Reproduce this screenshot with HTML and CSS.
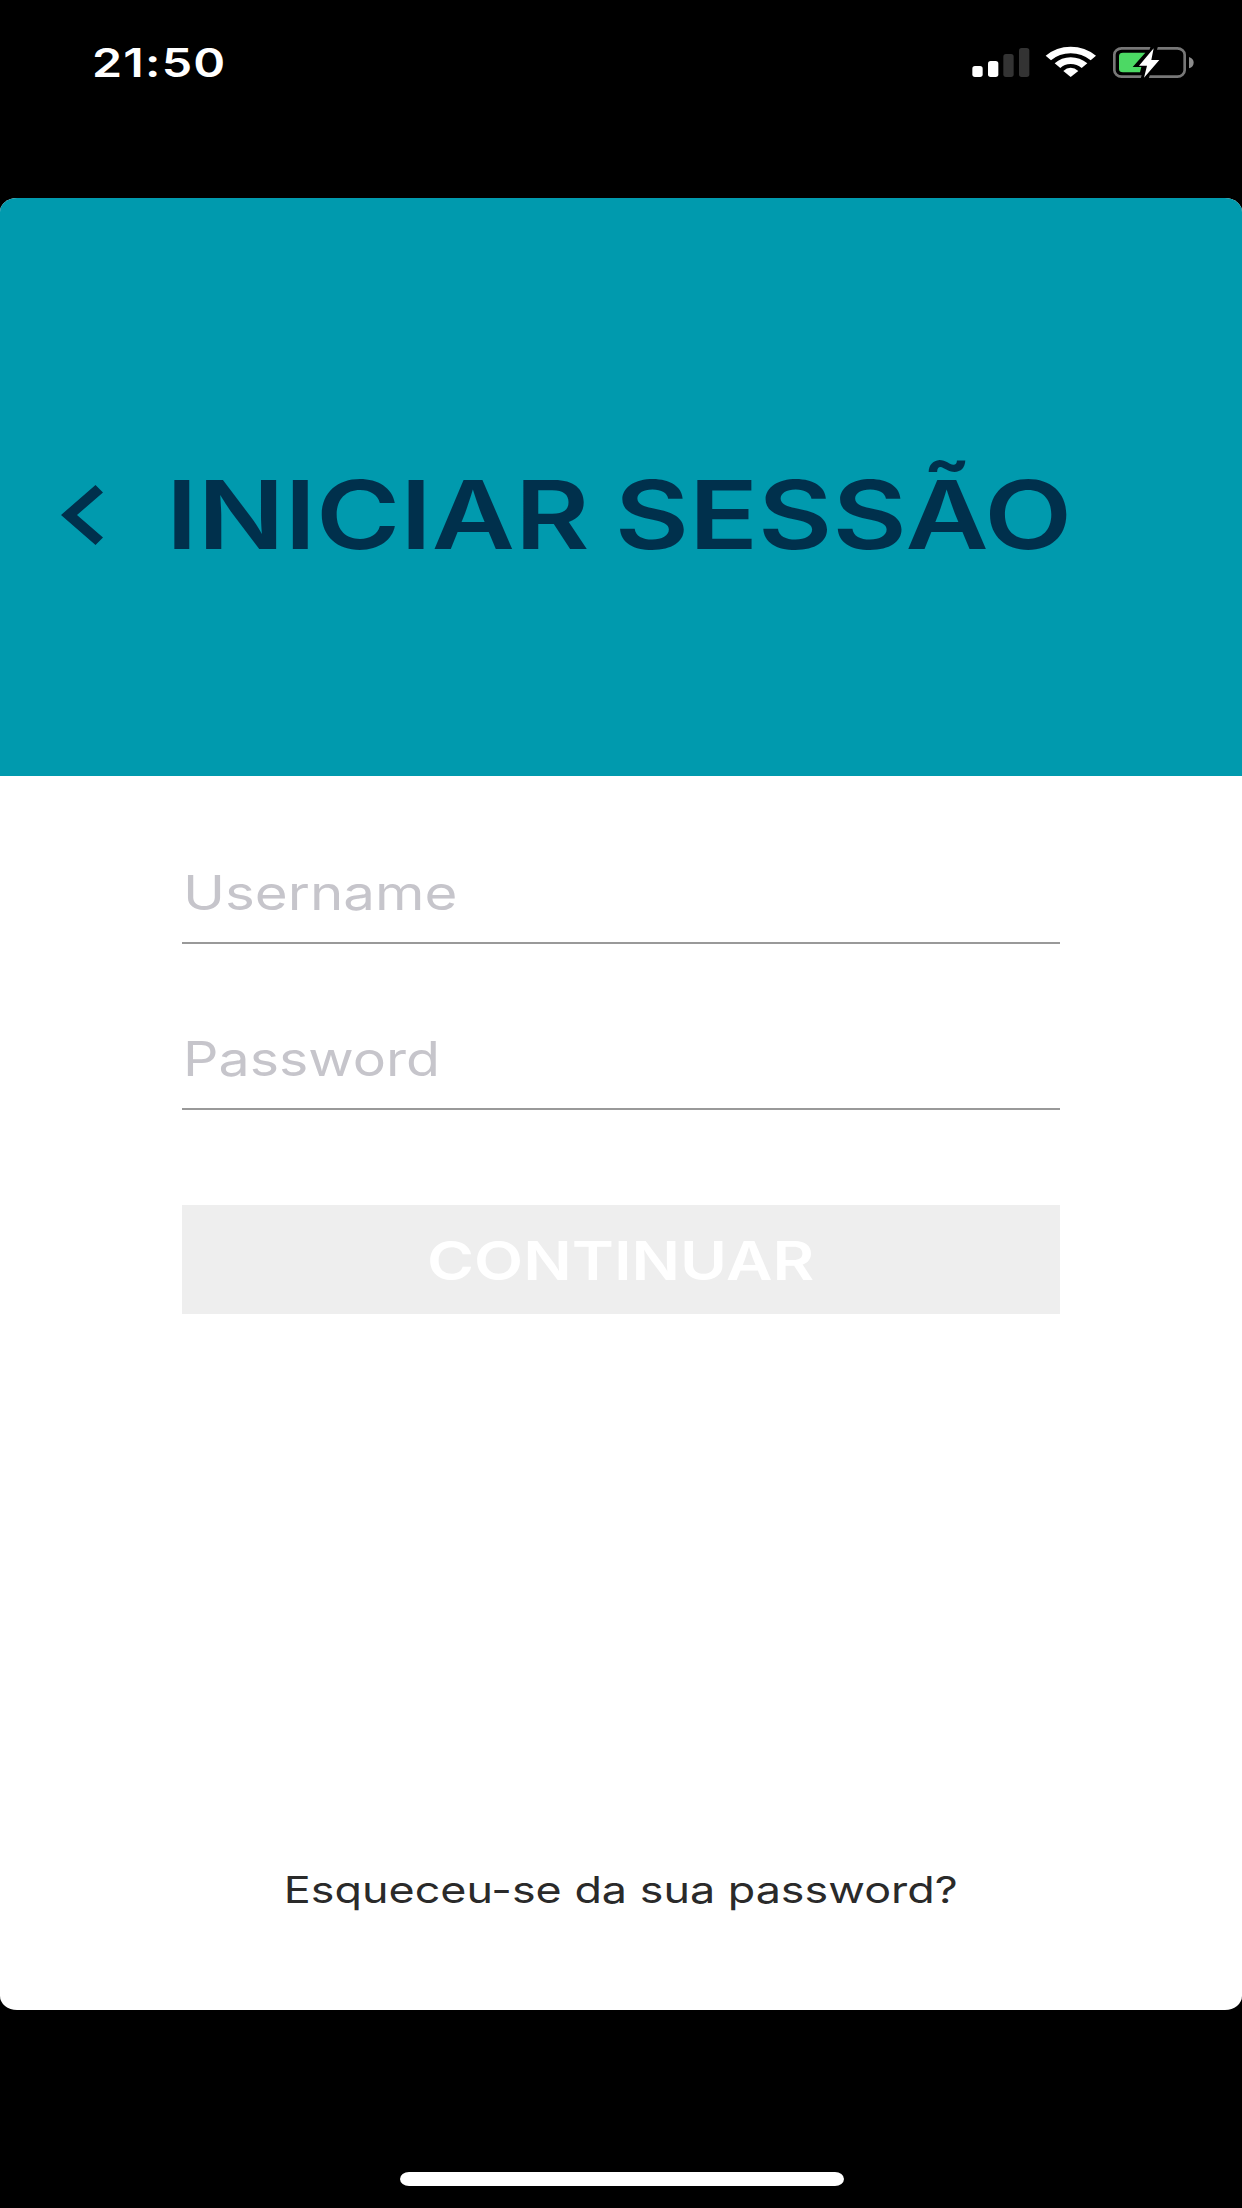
FILE: index.html
```html
<!DOCTYPE html>
<html lang="pt">
<head>
<meta charset="utf-8">
<title>Iniciar sessão</title>
<link rel="stylesheet" href="styles.css">
</head>
<body>
<div class="status">
  <span class="wide time">21:50</span>
  <svg class="status-icons" viewBox="0 0 810 210" aria-hidden="true">
    <g fill="#fff">
      <rect x="67" y="108" width="31" height="33" rx="8"/>
      <rect x="114" y="93" width="31" height="48" rx="8"/>
      <g fill="#333">
        <rect x="160" y="72" width="31" height="69" rx="8"/>
        <rect x="207" y="54" width="31" height="87" rx="8"/>
      </g>
      <path d="M287 77Q319 50 362 50T438 77L422 91Q396 70 362 70T303 91Z"/>
      <path d="M314 100Q334 82 362 82T412 100L395 114Q381 102 362 102T331 114Z"/>
      <path d="M340 123Q350 113 362 113T385 123L362 141Z"/>
    </g>
    <rect x="493" y="55" width="211" height="85" rx="22" ry="19" fill="none" stroke="#777" stroke-width="8"/>
    <path d="M717 81Q731 86 731 98T717 115Z" fill="#8c8c8c"/>
    <path d="M519 68H586L548 111H574L570 127H519Q507 127 507 117V78Q507 68 519 68Z" fill="#4cd964"/>
    <path d="M603 46H625L617 72L612 92L596 146H572L580 116Z" fill="#000"/>
    <path d="M611 55L567 107H591L582 143L628 90H604Z" fill="#fff"/>
  </svg>
</div>
<main class="card">
  <header class="header">
    <svg class="back" viewBox="0 0 42 60" aria-hidden="true"><path d="M34.500 0L42 7.500L16 30L42 52.500L34.500 60L0 30Z" fill="#00304c"/></svg>
    <h1 class="wide title">INICIAR SESSÃO</h1>
  </header>
  <form class="form">
    <div class="field"><span class="wide username">Username</span></div>
    <div class="field"><span class="wide password">Password</span></div>
    <div class="button"><span class="wide continue">CONTINUAR</span></div>
  </form>
  <div class="forgot"><span class="wide forgot-link">Esqueceu-se da sua password?</span></div>
</main>
<footer class="home"><div class="home-bar"></div></footer>
</body>
</html>
```
FILE: styles.css
```css
* { box-sizing: border-box; }

body {
  margin: 0;
  width: 1242px;
  height: 2208px;
  display: flex;
  flex-direction: column;
  background: #000;
  font-family: Inter, "Liberation Sans", sans-serif;
  overflow: hidden;
}

/* Wide lettering */
.wide {
  display: inline-block;
  white-space: nowrap;
  transform-origin: left center;
}

.status {
  height: 198px;
  flex: none;
  display: flex;
  justify-content: space-between;
  align-items: flex-start;
  padding: 30px 22px 0 92px;
}

.time {
  color: #fff;
  font-size: 39.500px;
  font-weight: 600;
  line-height: 67px;
  letter-spacing: 1px;
  transform: scaleX(1.225);
}

.status-icons { width: 270px; height: 70px; }

.card {
  height: 1812px;
  flex: none;
  display: flex;
  flex-direction: column;
  background: #fff;
  border-radius: 17px / 14px;
  overflow: hidden;
}

.header {
  height: 578px;
  display: flex;
  align-items: center;
  gap: 63px;
  padding: 55px 0 0 61px;
  background: #009aae;
}

.back { width: 42px; height: 60px; }

.title {
  margin: 0;
  color: #00304c;
  font-size: 94.500px;
  font-weight: 600;
  line-height: 120px;
  word-spacing: -3px;
  transform: scaleX(1.209);
}

.form {
  display: flex;
  flex-direction: column;
  gap: 64px;
  padding: 66px 182px 0;
}

.field {
  height: 102px;
  display: flex;
  align-items: center;
  padding-left: 1px;
  border-bottom: 2px solid #999;
  color: #c6c5cb;
  font-size: 47.500px;
}

.username { transform: scaleX(1.189); }
.password { transform: scaleX(1.169); }

.button {
  height: 109px;
  margin-top: 31px;
  padding-top: 2px;
  display: flex;
  align-items: center;
  justify-content: center;
  background: #eee;
}

.continue {
  color: #fff;
  font-size: 53px;
  font-weight: 600;
  transform: scaleX(1.206);
  transform-origin: center;
}

.forgot {
  margin-top: auto;
  height: 241px;
  display: flex;
  align-items: center;
  justify-content: center;
}

.forgot-link {
  color: #2a2a2a;
  font-size: 37px;
  transform: scaleX(1.213);
  transform-origin: center;
}

.home {
  flex: 1;
  display: flex;
  align-items: flex-end;
  justify-content: center;
  padding: 0 0 22px 1px;
}

.home-bar {
  width: 444px;
  height: 14px;
  border-radius: 9px / 7px;
  background: #fff;
}
```
